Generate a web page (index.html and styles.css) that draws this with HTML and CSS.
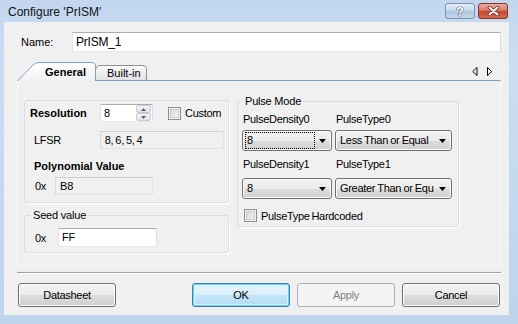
FILE: index.html
```html
<!DOCTYPE html>
<html lang="en">
<head>
    <meta charset="UTF-8">
    <title>Configure 'PrISM'</title>
    <link rel="stylesheet" href="styles.css">
</head>
<body>
    <div class="window">
        <div class="titlebar">
            <span class="title">Configure 'PrISM'</span>
            <div class="caption-buttons">
                <span class="cap-btn cap-help">?</span>
                <span class="cap-btn cap-close">
                    <svg width="13" height="10" viewBox="0 0 13 10"><path d="M2.5 1.5 L10.5 8.5 M10.5 1.5 L2.5 8.5" stroke="#6b2419" stroke-width="3.6" stroke-linecap="round"/><path d="M2.5 1.5 L10.5 8.5 M10.5 1.5 L2.5 8.5" stroke="#fff" stroke-width="2" stroke-linecap="round"/></svg>
                </span>
            </div>
        </div>

        <div class="client">
            <div class="name-row">
                <span class="name-label">Name:</span>
                <div class="textbox name-box">PrISM_1</div>
            </div>

            <!-- Tabs -->
            <div class="tabstrip">
                <div class="tab tab-general">
                    <svg class="tab-bg" width="79" height="19" viewBox="0 0 79 19">
                        <defs><linearGradient id="gGen" x1="0" y1="0" x2="0" y2="1"><stop offset="0" stop-color="#ffffff"/><stop offset="1" stop-color="#f2f2f2"/></linearGradient></defs>
                        <path d="M0.5 19 L16 3 Q18.5 0.5 22 0.5 L75 0.5 Q78.5 0.5 78.5 4 L78.5 19" fill="url(#gGen)" stroke="#7aa0d0"/>
                    </svg>
                    <span class="tab-text">General</span>
                </div>
                <div class="tab tab-builtin">
                    <svg class="tab-bg" width="55" height="15" viewBox="0 0 55 15">
                        <defs><linearGradient id="gBi" x1="0" y1="0" x2="0" y2="1"><stop offset="0" stop-color="#fbfbfb"/><stop offset="1" stop-color="#e2e2e2"/></linearGradient></defs>
                        <path d="M0.5 15 L4 3 Q5 0.5 8 0.5 L51 0.5 Q54.5 0.5 54.5 4 L54.5 15" fill="url(#gBi)" stroke="#8d9096"/>
                    </svg>
                    <span class="tab-text">Built-in</span>
                </div>
                <div class="tab-arrows">
                    <svg width="21" height="9" viewBox="0 0 21 9">
                        <path d="M5 0.5 L0.8 4.5 L5 8.5 Z" fill="#fff" stroke="#000"/>
                        <path d="M15.5 0.5 L19.7 4.5 L15.5 8.5 Z" fill="#fff" stroke="#000"/>
                    </svg>
                </div>
            </div>

            <div class="tab-panel">
                <div class="col-left">
                    <div class="group group-res">
                        <div class="row row-res">
                            <span class="lbl-bold lbl-res">Resolution</span>
                            <div class="textbox spin">
                                <span class="spin-text">8</span>
                                <span class="spin-btns">
                                    <span class="spin-btn"><svg width="5" height="3" viewBox="0 0 5 3"><path d="M0 3 L2.5 0 L5 3 Z" fill="#4d6185"/></svg></span>
                                    <span class="spin-btn"><svg width="5" height="3" viewBox="0 0 5 3"><path d="M0 0 L2.5 3 L5 0 Z" fill="#4d6185"/></svg></span>
                                </span>
                            </div>
                            <span class="check check-custom"></span>
                            <span class="check-text">Custom</span>
                        </div>
                        <div class="row row-lfsr">
                            <span class="lbl lbl-lfsr">LFSR</span>
                            <div class="readonly field-lfsr">8, 6, 5, 4</div>
                        </div>
                        <div class="lbl-bold lbl-poly">Polynomial Value</div>
                        <div class="row row-poly">
                            <span class="prefix">0x</span>
                            <div class="readonly field-poly">B8</div>
                        </div>
                    </div>

                    <fieldset class="group group-seed">
                        <legend>Seed value</legend>
                        <div class="row row-seed">
                            <span class="prefix">0x</span>
                            <div class="textbox field-seed">FF</div>
                        </div>
                    </fieldset>
                </div>

                <fieldset class="group group-pulse">
                    <legend>Pulse Mode</legend>
                    <div class="combo-grid">
                        <span class="lbl combo-lbl">PulseDensity0</span>
                        <span class="lbl combo-lbl">PulseType0</span>
                        <div class="combo">
                            <span class="combo-text combo-focus">8</span>
                            <svg class="combo-arrow" width="7" height="4" viewBox="0 0 7 4"><path d="M0 0 L7 0 L3.5 4 Z" fill="#000"/></svg>
                        </div>
                        <div class="combo">
                            <span class="combo-text">Less Than or Equal</span>
                            <svg class="combo-arrow" width="7" height="4" viewBox="0 0 7 4"><path d="M0 0 L7 0 L3.5 4 Z" fill="#000"/></svg>
                        </div>
                        <span class="lbl combo-lbl combo-lbl2">PulseDensity1</span>
                        <span class="lbl combo-lbl combo-lbl2">PulseType1</span>
                        <div class="combo combo2">
                            <span class="combo-text">8</span>
                            <svg class="combo-arrow" width="7" height="4" viewBox="0 0 7 4"><path d="M0 0 L7 0 L3.5 4 Z" fill="#000"/></svg>
                        </div>
                        <div class="combo combo2">
                            <span class="combo-text">Greater Than or Equ</span>
                            <svg class="combo-arrow" width="7" height="4" viewBox="0 0 7 4"><path d="M0 0 L7 0 L3.5 4 Z" fill="#000"/></svg>
                        </div>
                    </div>
                    <div class="row row-hard">
                        <span class="check"></span>
                        <span class="check-text">PulseType Hardcoded</span>
                    </div>
                </fieldset>
            </div>

            <div class="separator"></div>

            <div class="button-row">
                <div class="btn btn-datasheet">Datasheet</div>
                <div class="btn-group">
                    <div class="btn btn-default">OK</div>
                    <div class="btn btn-disabled">Apply</div>
                    <div class="btn">Cancel</div>
                </div>
            </div>
        </div>
    </div>
</body>
</html>
```

FILE: styles.css
```css
/* Global */
* {
    box-sizing: border-box;
}

body {
    margin: 0;
    font-family: "Liberation Sans", Arial, sans-serif;
    font-size: 11px;
    color: #000;
    overflow: hidden;
}

/* Window frame */
.window {
    width: 518px;
    height: 324px;
    display: flex;
    flex-direction: column;
    padding: 0 9px 9px 4px;
    background: linear-gradient(#c2d7ef, #cbddf1 20%, #bed4ed 100%);
}

.titlebar {
    height: 22px;
    flex: none;
    display: flex;
    justify-content: space-between;
    align-items: flex-start;
}

.title {
    font-size: 12px;
    line-height: 14px;
    margin: 5px 0 0 4px;
    color: #111;
}

.caption-buttons {
    display: flex;
    gap: 3px;
    margin: 3px 1px 0 0;
}

.cap-btn {
    width: 30px;
    height: 16px;
    border-radius: 3px;
    display: flex;
    align-items: center;
    justify-content: center;
}

.cap-help {
    border: 1px solid #7990ad;
    background: linear-gradient(#e6eef8, #c9d9ec 45%, #b2c7e1 50%, #c4d6ea);
    color: #fff;
    font-weight: bold;
    font-size: 13px;
    text-shadow: 0 0 1px #3e4e66, 0 0 1px #3e4e66, 0 0 1px #3e4e66;
}

.cap-close {
    border: 1px solid #8c3226;
    background: linear-gradient(#eaa99d, #d9806f 45%, #c5482f 50%, #d3694f);
}

/* Client area */
.client {
    flex: 1;
    background: #f0f0f0;
    padding: 10px 8px 8px 13px;
    display: flex;
    flex-direction: column;
}

.name-row {
    display: flex;
    align-items: center;
    height: 20px;
}

.name-label {
    width: 55px;
    padding-left: 4px;
}

.textbox {
    background: #fff;
    border: 1px solid;
    border-color: #abadb3 #dbdfe6 #e3e9ef #e2e3ea;
    line-height: 16px;
    padding-left: 3px;
    letter-spacing: -0.2px;
}

.name-box {
    flex: 1;
    height: 20px;
    line-height: 18px;
    font-size: 12px;
}

/* Tabs */
.tabstrip {
    margin-top: 10px;
    height: 18px;
    display: flex;
    align-items: flex-end;
    position: relative;
    z-index: 2;
}

.tab {
    position: relative;
    line-height: 14px;
}

.tab-bg {
    position: absolute;
    left: 0;
    top: 0;
}

.tab-text {
    position: relative;
}

.tab-general {
    width: 79px;
    height: 19px;
    margin-bottom: -1px;
    padding: 3px 0 0 28px;
    font-weight: bold;
    z-index: 2;
}

.tab-builtin {
    width: 55px;
    height: 15px;
    margin-left: -4px;
    padding: 1px 0 0 15px;
    z-index: 1;
}

.tab-arrows {
    margin: 0 8px 0 auto;
    align-self: center;
    display: flex;
}

.tab-panel {
    height: 186px;
    flex: none;
    border: 1px solid #fafafa;
    border-top-color: #7aa0d0;
    padding: 13px 0 0 6px;
    display: flex;
    gap: 8px;
    align-items: flex-start;
}

/* Group boxes */
.group {
    border: 1px solid #d5dfe5;
    border-radius: 3px;
    box-shadow: 1px 1px 0 #fff;
    margin: 0;
    min-width: 0;
    padding: 0;
}

.group legend {
    padding: 0 2px;
    line-height: 14px;
    letter-spacing: -0.2px;
}

.col-left {
    width: 205px;
    flex: none;
    display: flex;
    flex-direction: column;
}

.group-res {
    margin-top: 6px;
    padding: 3px 4px 7px 5px;
}

.row {
    display: flex;
    align-items: center;
}

.lbl,
.check-text,
.prefix {
    letter-spacing: -0.3px;
    word-spacing: -1px;
}

.lbl-bold {
    font-weight: bold;
    line-height: 14px;
}

.row-res {
    height: 18px;
}

.lbl-res {
    width: 70px;
}

.spin {
    width: 53px;
    height: 18px;
    display: flex;
    justify-content: space-between;
    padding-right: 1px;
}

.spin-btns {
    width: 15px;
    display: flex;
    flex-direction: column;
}

.spin-btn {
    flex: 1;
    display: flex;
    align-items: center;
    justify-content: center;
    border: 1px solid #c9cbd0;
    border-radius: 2px;
    background: linear-gradient(#f6f6f6, #e2e2e2);
}

.check {
    width: 13px;
    height: 13px;
    flex: none;
    border: 1px solid #8e8f8f;
    background: linear-gradient(135deg, #d2d4d8, #f8f8f8);
    box-shadow: inset 0 0 0 1px #f2f2f2, inset 0 0 0 2px #c9ccd1;
}

.check-custom {
    margin-left: 15px;
}

.check-text {
    margin-left: 4px;
}

.readonly {
    height: 18px;
    line-height: 16px;
    padding-left: 4px;
    background: #f0f0f0;
    border: 1px solid;
    border-color: #cfcfcf #e3e3e3 #e3e3e3 #d8d8d8;
    letter-spacing: -0.2px;
    word-spacing: -1px;
}

.row-lfsr {
    margin-top: 9px;
}

.lbl-lfsr {
    width: 66px;
    margin-left: 4px;
}

.field-lfsr {
    width: 125px;
}

.lbl-poly {
    margin: 10px 0 0 4px;
}

.row-poly {
    margin-top: 4px;
}

.prefix {
    width: 20px;
    margin-left: 5px;
}

.field-poly {
    width: 98px;
}

.group-seed {
    margin-top: 5px;
    padding-bottom: 5px;
}

.group-seed legend {
    margin-left: 6px;
}

.row-seed {
    margin-top: 6px;
}

.row-seed .prefix {
    width: 23px;
    margin-left: 10px;
}

.field-seed {
    width: 99px;
    height: 19px;
}

/* Pulse Mode */
.group-pulse {
    width: 222px;
    flex: none;
    padding: 0 0 4px 4px;
}

.group-pulse legend {
    margin-left: 1px;
}

.combo-grid {
    display: grid;
    grid-template-columns: 90px 117px;
    column-gap: 3px;
    margin-top: 4px;
}

.combo-lbl {
    line-height: 14px;
    padding-left: 1px;
}

.combo-lbl2 {
    margin-top: 6px;
}

.combo {
    height: 21px;
    margin-top: 4px;
    border: 1px solid #707070;
    border-radius: 3px;
    background: linear-gradient(#f2f2f2, #ebebeb 50%, #dddddd 51%, #cfcfcf);
    box-shadow: inset 0 0 0 1px #fbfbfb;
    display: flex;
    align-items: center;
    padding: 0 5px 0 2px;
}

.combo2 {
    margin-top: 7px;
}

.combo-text {
    flex: 1;
    white-space: nowrap;
    line-height: 15px;
    padding-left: 2px;
    letter-spacing: -0.3px;
    word-spacing: -0.5px;
}

.combo-focus {
    flex: none;
    width: 70px;
    outline: 1px dotted #000;
    outline-offset: -1px;
    line-height: 17px;
}

.combo-arrow {
    flex: none;
    margin-left: auto;
}

.row-hard {
    margin: 10px 0 0 2px;
}

/* Bottom */
.separator {
    margin-top: 6px;
    height: 2px;
    border-top: 1px solid #a0a0a0;
    border-bottom: 1px solid #fff;
}

.button-row {
    margin-top: 9px;
    display: flex;
    justify-content: space-between;
    padding: 0 1px;
}

.btn-group {
    display: flex;
    gap: 7px;
}

.btn {
    width: 98px;
    height: 24px;
    line-height: 22px;
    text-align: center;
    border: 1px solid #707070;
    border-radius: 3px;
    background: linear-gradient(#f2f2f2, #ebebeb 50%, #dddddd 51%, #cfcfcf);
    box-shadow: inset 0 0 0 1px #fcfcfc;
    letter-spacing: -0.3px;
}

.btn-default {
    border-color: #3c7fb1;
    background: linear-gradient(#e8f5fc, #d9effb 50%, #c4e6f9 51%, #b4dcf3);
    box-shadow: inset 0 0 0 1px #6fd0f5, inset 0 0 0 2px #d8f2fd;
}

.btn-disabled {
    border-color: #adb2b5;
    background: #f4f4f4;
    box-shadow: none;
    color: #838383;
}
```
